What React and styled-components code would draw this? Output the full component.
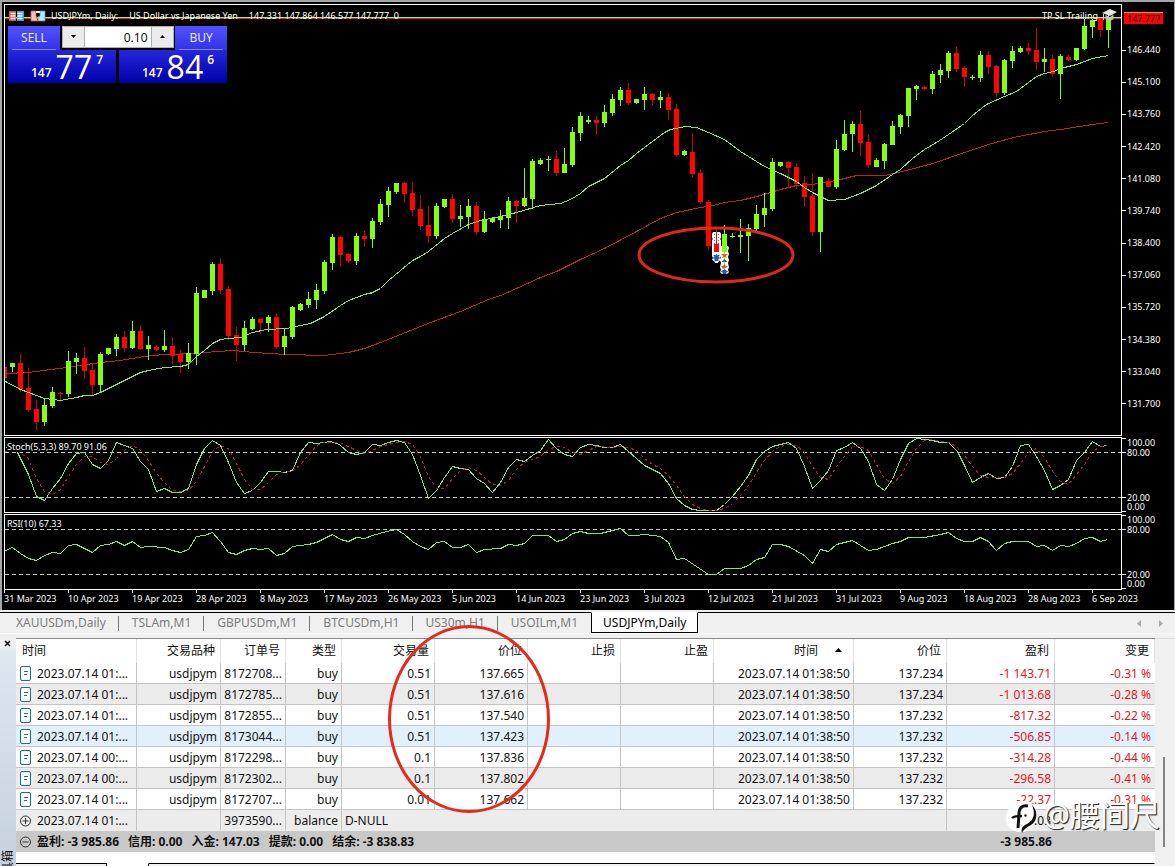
import React from 'react';
import styled, { createGlobalStyle } from 'styled-components';

const Global = createGlobalStyle`
  *, *::before, *::after { box-sizing: border-box; }
  html, body { margin: 0; padding: 0; background: #f0f0f0; }
  button, input { font: inherit; color: inherit; margin: 0; padding: 0; border: 0; border-radius: 0; }
`;

/* ---------- chart data, traced on a grid of three units per pixel ---------- */

// colour, high, body top, body bottom, low
const candleGroups = [
  {
    first: 0,
    top: 220,
    rows: `r 441 441 473 473|g 429 429 441 455|r 402 429 507 517|r 444 504 570 575|r 540 567 606 629|g 535 555 606 617|g 501 516 558 563|r 516 519 522 541|g 393 423 522 530|g 399 414 426 461|r 381 414 453 476|r 432 450 495 524|g 396 402 495 518|g 384 384 402 405|g 342 351 387 408|r 334 351 384 395|g 303 333 384 388|r 315 333 387 390|g 348 375 387 419|r 375 381 390 393|g 330 378 390 397|r 351 378 408 431|r 390 402 426 459|g 369 399 426 446|g 201 219 402 434|g 210 210 234 234|g 126 132 213 224|r 114 132 210 221|r 198 207 348 359|r 321 345 375 422|g 303 324 375 394|g 291 297 327 330|r 297 297 309 342|g 285 291 309 335|r 280 291 381 387|g 324 348 381 404|g 258 261 351 357|g 249 252 270 273|g 216 237 255 263|g 192 210 240 266|g 120 126 213 221|g 42 51 129 150|r 48 51 105 140|r 99 102 123 128|g 39 48 123 134|r 33 48 57 81`,
  },
  {
    first: 46,
    top: 60,
    rows: `g 475 483 537 564|g 417 432 486 494|g 381 393 435 470|g 369 369 396 402|r 366 369 402 429|r 366 399 450 467|r 405 447 498 509|r 438 495 528 548|g 429 438 528 537|g 417 417 441 444|r 402 417 477 488|g 435 468 477 500|g 417 438 471 507|r 426 438 516 524|g 453 477 516 518|g 471 474 486 489|g 450 468 480 504|g 411 423 474 506|r 420 423 438 489|g 324 414 438 441|g 297 303 417 446|g 294 300 312 315|g 288 297 301 333|r 273 297 339 347|g 264 312 339 339|g 201 216 315 320|g 156 168 219 242|g 168 180 186 192|r 168 180 189 224|g 135 156 189 200|g 102 117 159 168|g 81 90 120 138|r 69 90 129 134|g 117 117 129 132|g 81 102 120 150|r 99 102 120 134|g 93 111 120 144|r 99 111 150 180|r 132 147 285 291|g 270 273 285 288|r 219 276 342 350|r 327 339 426 432|r 420 426 558 570|r 507 552 576 585|g 495 522 576 640|g 519 527 531 534|g 477 525 531 579|g 492 504 528 602`,
  },
  {
    first: 94,
    top: 0,
    rows: `g 615 642 687 692|g 579 624 645 681|g 474 486 627 633|g 486 486 498 501|r 483 486 504 561|r 489 501 552 567|r 528 549 591 621|r 519 588 696 708|g 531 531 696 756|r 534 543 561 561|g 420 447 561 567|g 360 402 450 453|g 363 372 402 456|r 333 372 429 467|r 405 426 495 504|g 474 480 501 501|g 429 432 483 507|g 363 378 435 435|g 342 345 381 402|g 264 264 348 381|g 255 258 267 300|r 258 261 267 270|g 213 222 267 281|g 192 210 225 249|g 153 159 213 234|r 141 159 207 215|r 198 204 231 261|g 225 230 234 240|g 153 165 234 246|r 153 165 201 221|r 195 198 279 291|g 177 180 279 285|g 138 153 183 204|g 138 144 156 159|r 129 144 153 165|r 84 150 186 210|g 144 177 186 216|r 165 177 222 231|g 162 168 222 297|r 165 171 180 183|g 144 144 180 183|g 57 78 147 150|g 57 60 81 113|r 54 57 90 110|g 45 57 90 144`,
  },
];

const candles = candleGroups.flatMap(({ first, top, rows }) =>
  rows.split('|').map((row, i) => {
    const [tone, ...levels] = row.split(' ');
    const [high, open, close, low] = levels.map((v) => top + Math.round(v / 3));
    return { x: 4 + 8 * (first + i), tone, high, open, close, low };
  })
);

const trace = (...parts) =>
  parts
    .flatMap(([left, top, pairs]) =>
      pairs.split(' ').map((pair) => {
        const [x, y] = pair.split(',').map(Number);
        return `${Math.floor(left + x / 3) + 0.5},${Math.floor(top + y / 3) + 0.5}`;
      })
    )
    .join(' ');

const fastAverage = trace(
  [0, 220, '15,484 62,507 86,516 110,525 134,536 182,541 230,533 254,527 278,525 302,517 326,506 350,492 374,481 398,468 422,458 446,452 494,443 542,440 566,432 590,408 614,390 638,370 662,359 686,355 722,351 758,338 800,328 860,326 902,317 930,309 974,289 1022,255 1046,242 1094,222 1118,216'],
  [360, 60, '30,699 62,684 86,661 120,630 158,601 182,590 206,575 254,535 278,520 326,494 360,480 422,468 470,456 542,437 600,430 630,417 662,399 686,379 734,354 782,316 806,300 830,280 878,243 912,217 930,208 975,199 1010,201 1046,218 1094,239'],
  [740, 0, '0,454 73,498 121,521 169,543 193,562 217,578 241,590 265,601 313,598 361,580 409,556 457,524 481,508 517,474 553,448 590,428 625,402 673,370 697,346 740,312 793,290 830,273 865,246 890,230 913,219 940,213 961,205 1009,194 1057,175 1105,166']
);
const slowAverage = trace(
  [0, 220, '15,461 86,456 200,443 300,428 360,420 430,409 494,403 590,400 650,393 700,392 760,397 860,404 974,406 1046,397 1094,384 1142,367 1200,343 1290,306 1380,274'],
  [360, 60, '385,718 422,706 470,685 542,653 590,634 662,597 734,564 830,513 900,475 950,457 1020,441 1060,436 1094,427'],
  [740, 0, '0,601 60,585 121,569 169,555 217,552 289,541 349,527 433,525 500,511 577,489 673,457 745,434 820,413 913,394 961,389 1057,372 1105,367']
);
const stochMain = trace(
  [0, 430, '15,52 38,52 53,67 86,132 110,198 134,210 158,176 182,145 206,100 230,70 254,68 278,102 302,115 326,92 350,37 374,46 398,54 422,94 446,118 470,184 494,175 518,187 542,187 566,174 590,102 614,56 638,31 662,47 686,98 710,158 734,189 758,180 782,157 806,124 830,124 854,127 878,122 902,67 926,37 950,40 990,34 1018,43 1046,68 1070,73 1094,68 1118,43 1142,45 1166,36 1190,31'],
  [400, 430, '13,38 37,73 61,136 85,205 109,181 133,142 157,109 181,114 205,118 229,144 253,160 277,187 301,158 325,112 349,88 373,94 397,76 421,62 445,28 469,54 493,73 517,80 541,53 565,42 589,47 613,52 637,52 661,43 685,65 709,84 733,105 757,117 781,129 805,160 829,204 853,226 877,238 901,241 949,241 973,222 997,200 1021,170 1045,135 1069,87 1093,65 1117,49'],
  [780, 430, '1,42 25,37 49,55 73,108 97,176 121,152 145,122 169,60 193,52 217,37 241,54 265,94 289,162 313,181 337,148 361,88 385,41 409,25 433,28 457,31 481,36 505,38 533,64 553,105 577,156 601,142 625,130 649,145 673,142 697,110 721,47 745,43 769,80 793,120 817,177 841,166 865,149 889,92 913,66 937,35 961,49 983,46']
);
const stochSignal = trace(
  [0, 430, '15,65 50,60 86,85 110,145 134,183 158,193 182,178 206,140 230,103 254,78 278,78 302,97 326,104 350,85 374,60 398,46 422,62 446,90 470,131 494,158 518,180 542,184 566,182 590,155 614,110 638,64 662,45 686,56 710,100 734,148 758,178 782,178 806,157 830,133 854,125 878,124 902,103 926,76 950,46 974,38 1018,37 1046,49 1070,62 1094,69 1118,61 1142,50 1166,44 1190,36'],
  [400, 430, '13,34 37,43 61,80 85,140 109,176 133,175 157,145 181,120 205,112 229,120 253,142 277,164 301,166 325,152 349,118 373,96 397,87 421,78 445,58 469,48 493,51 517,68 541,72 565,62 589,50 637,52 661,48 685,52 709,60 733,84 757,102 781,115 805,135 829,165 853,200 877,224 901,235 925,240 949,241 973,235 997,221 1021,197 1045,165 1069,128 1093,92 1117,65'],
  [780, 430, '1,48 25,43 49,46 73,66 97,108 121,142 145,149 169,110 193,78 217,49 241,50 265,62 289,103 313,145 337,161 361,140 385,95 409,55 433,32 457,29 481,33 505,38 529,50 553,75 577,110 601,135 625,142 673,142 697,130 721,100 745,68 769,55 793,82 817,123 841,154 865,163 889,132 913,104 937,65 961,48 983,46']
);
const rsiLine = trace(
  [0, 430, '15,360 38,352 62,370 86,384 110,391 134,377 158,367 182,370 206,346 230,343 254,355 278,367 302,346 326,343 350,334 374,346 398,334 422,352 446,349 494,352 518,361 542,367 566,357 590,320 614,316 638,307 662,333 686,367 710,373 734,361 758,355 782,358 806,355 830,376 854,370 878,350 926,344 950,336 998,313 1022,328 1046,333 1070,322 1094,325 1118,316 1160,304 1190,299'],
  [400, 430, '13,312 37,333 61,348 85,357 109,338 133,334 157,352 181,352 205,343 229,367 253,358 301,355 325,343 349,346 373,340 397,316 445,316 469,334 493,328 517,310 541,303 565,310 601,310 661,296 685,316 709,316 733,313 781,320 805,338 829,388 853,385 925,433 949,433 973,415 1021,415 1045,406 1069,388 1093,381 1117,343'],
  [780, 430, '1,343 25,349 73,375 97,400 121,358 145,364 169,343 217,331 265,361 289,358 337,341 361,334 385,322 433,322 481,313 505,307 529,325 553,334 577,334 601,322 625,333 649,361 673,340 697,334 745,334 769,349 793,346 817,360 841,346 865,350 889,340 913,325 937,322 961,334 983,328']
);

const prices = ['146.440', '145.100', '143.760', '142.420', '141.080', '139.740', '138.400', '137.060', '135.720', '134.380', '133.040', '131.700'];
const dates = ['31 Mar', '10 Apr', '19 Apr', '28 Apr', '8 May', '17 May', '26 May', '5 Jun', '14 Jun', '23 Jun', '3 Jul', '12 Jul', '21 Jul', '31 Jul', '9 Aug', '18 Aug', '28 Aug', '6 Sep'];
const symbolTabs = ['XAUUSDm,Daily', 'TSLAm,M1', 'GBPUSDm,M1', 'BTCUSDm,H1', 'US30m,H1', 'USOILm,M1'];
const totals = ['盈利: -3 985.86', '信用: 0.00', '入金: 147.03', '提款: 0.00', '结余: -3 838.83'];
const columns = [
  ['时间', 121], ['交易品种', 84], ['订单号', 65], ['类型', 56], ['交易量', 93], ['价位', 93],
  ['止损', 93], ['止盈', 93], ['时间', 140], ['价位', 93], ['盈利', 108], ['变更', 100],
];
const deals = [
  ['01', '8172708', '0.51', '137.665', '137.234', '-1 143.71', '-0.31 %'],
  ['01', '8172785', '0.51', '137.616', '137.234', '-1 013.68', '-0.28 %'],
  ['01', '8172855', '0.51', '137.540', '137.232', '-817.32', '-0.22 %'],
  ['01', '8173044', '0.51', '137.423', '137.232', '-506.85', '-0.14 %'],
  ['00', '8172298', '0.1', '137.836', '137.232', '-314.28', '-0.44 %'],
  ['00', '8172302', '0.1', '137.802', '137.232', '-296.58', '-0.41 %'],
  ['01', '8172707', '0.01', '137.662', '137.232', '-22.37', '-0.31 %'],
];

/* ---------- styled parts ---------- */

const Workspace = styled.div`
  position: relative;
  height: 100vh;
  overflow: hidden;
  background: #f0f0f0;
  color: #111;
  font: 12px/20px "Noto Sans", "Noto Sans CJK SC", sans-serif;
`;
const ChartWindow = styled.section`
  display: grid;
  grid-template-columns: minmax(0, 1fr) 52px;
  row-gap: 1px;
  padding: 2px 0 0 2px;
  border: solid #a3a6a6;
  border-width: 2px 1px 0 2px;
  background: #000;
  color: #fff;
  font-size: 9px;
  line-height: 12px;
`;
const Pane = styled.div`
  position: relative;
  height: ${(p) => p.$height}px;
  border: 1px solid #fff;
`;
const Plot = styled.svg`
  display: block;
  width: 100%;
  height: 100%;
`;
const PaneLabel = styled.span`
  position: absolute;
  top: 3px;
  left: 2px;
  background: #000;
  line-height: 11px;
  white-space: pre;
`;
const PriceScale = styled.div`
  display: flex;
  flex-direction: column;
  height: 432px;
  padding: 8px 0 26px;
`;
const LastPrice = styled.span`
  width: 39px;
  height: 12px;
  margin: 0 0 20px 2px;
  padding-left: 3px;
  border-top: 1px solid #f09020;
  background: #f00;
  color: #000;
`;
const PriceLabels = styled.div`
  flex: 1;
  display: flex;
  flex-direction: column;
  justify-content: space-between;
`;
const ScaleLabel = styled.span`
  display: flex;
  align-items: center;
  gap: 1px;
  &::before {
    content: '';
    width: 4px;
    height: 1px;
    background: ${(p) => (p.$plain ? 'transparent' : '#fff')};
  }
`;
const LevelScale = styled.div`
  display: flex;
  flex-direction: column;
  justify-content: space-between;
  height: 76px;
  line-height: 9px;
  padding: 1px 0 2px;
  background: linear-gradient(#fff, #fff) 0 1px / 4px 1px no-repeat, linear-gradient(#fff, #fff) 0 74px / 4px 1px no-repeat;
`;
const LevelPair = styled.div`
  display: grid;
  row-gap: ${(p) => p.$gap}px;
`;
const DateScale = styled.div`
  grid-column: 1 / -1;
  display: grid;
  grid-template-columns: repeat(17, minmax(0, 64fr)) minmax(0, 82fr);
  height: 20px;
  margin-top: -1px;
`;
const DateLabel = styled.span`
  white-space: nowrap;
  &::before {
    content: '';
    display: block;
    width: 1px;
    height: 3px;
    background: #fff;
  }
`;
const ChartTitle = styled.div`
  position: absolute;
  top: 4px;
  left: 4px;
  right: 4px;
  display: flex;
  align-items: center;
  white-space: pre;
`;
const TitleIcon = styled.svg`
  width: 16px;
  height: 12px;
  margin-right: 5px;
`;
const TitleText = styled.span`
  display: flex;
  gap: 11px;
`;
const Expert = styled.span`
  display: flex;
  gap: 4px;
  align-items: center;
  margin-left: auto;
`;

const TradePanel = styled.div`
  position: absolute;
  top: 21px;
  left: 3px;
  width: 219px;
  font-family: "Open Sans", "Noto Sans", sans-serif;
`;
const TradeRow = styled.div`
  display: flex;
  justify-content: space-between;
`;
const SideButton = styled.button`
  width: 52px;
  height: 24px;
  background: linear-gradient(#5252ff, #3232e6);
  color: #eef;
  font-size: 12px;
  line-height: 23px;
  &::after {
    content: '';
    display: block;
    height: 1px;
    margin: 0 4px;
    background: #8686ff;
  }
`;
const Spinner = styled.div`
  display: flex;
  width: 112px;
  height: 22px;
  border: 1px solid #b0b0b0;
  background: #fff;
  color: #000;
`;
const SpinButton = styled.button`
  display: grid;
  place-items: center;
  flex: 0 0 21px;
  background: #ebebeb;
`;
const VolumeInput = styled.input`
  flex: 1;
  min-width: 0;
  padding: 0 3px;
  border: solid #b0b0b0;
  border-width: 0 1px;
  background: #fff;
  font-size: 12px;
  text-align: right;
  outline: 0;
`;
const PriceButton = styled.button`
  display: flex;
  width: 108px;
  height: 33px;
  padding-left: 23px;
  background: linear-gradient(#2626dc, #0000aa);
  color: #fff;
  font-size: 12px;
  font-weight: 600;
  text-align: left;
`;
const Whole = styled.span`
  padding-top: 13px;
  line-height: 20px;
`;
const Big = styled.span`
  margin: 0 4px;
  font-size: 32px;
  font-weight: 400;
  line-height: 34px;
`;
const Pip = styled.span`
  line-height: 20px;
`;

const TabBar = styled.nav`
  display: flex;
  height: 22px;
  margin-top: 2px;
  padding-left: 3px;
  border-top: 1px solid #000;
  border-bottom: 1px solid #fafafa;
  color: #7c7c7c;
`;
const Tab = styled.button`
  position: relative;
  padding: 0 13px;
  background: none;
  line-height: 20px;
  &:not(:last-of-type)::after {
    content: '';
    position: absolute;
    top: 3px;
    right: 0;
    width: 1px;
    height: 15px;
    background: #777;
  }
`;
const ActiveTab = styled.button`
  height: 21px;
  margin-top: -1px;
  padding: 0 11px;
  border: 1px solid #000;
  border-top-color: #fff;
  background: #fff;
  color: #000;
  line-height: 18px;
`;
const TabList = styled.div`
  display: flex;
`;
const Arrows = styled.div`
  display: flex;
  gap: 18px;
  margin-left: auto;
  padding-right: 12px;
  button { background: none; display: grid; place-items: center; }
`;

const Terminal = styled.section`
  display: grid;
  grid-template-columns: 16px minmax(0, 1fr) 20px;
  margin-top: 4px;
`;
const SideStrip = styled.aside`
  display: flex;
  flex-direction: column;
  justify-content: space-between;
  background: linear-gradient(#f0f0f0 8px, #dde7f0 14px, #c2cfdd);
`;
const CloseButton = styled.button`
  width: 14px;
  height: 11px;
  display: grid;
  place-items: center;
  background: none;
`;
const StripLabel = styled.span`
  writing-mode: vertical-rl;
  text-orientation: sideways;
  rotate: 180deg;
  line-height: 16px;
`;
const TablePanel = styled.div`
  background: #fff;
  border-top: 1px solid #888;
`;
const DealTable = styled.table`
  width: 100%;
  table-layout: fixed;
  border-collapse: separate;
  border-spacing: 0;
`;
const HeadCell = styled.th`
  height: 24px;
  padding: 0 5px;
  border-right: 1px solid #e2e2e2;
  font-weight: 400;
  text-align: right;
  white-space: nowrap;
  &:first-child { text-align: left; padding-left: 6px; }
`;
const SortMark = styled.svg`
  margin: 0 6px 3px 17px;
  vertical-align: middle;
`;
const Row = styled.tr`
  background: ${(p) => p.$fill};
`;
const Cell = styled.td`
  height: 21px;
  padding: 2px 3px 0;
  border: solid #c4c4c4;
  border-width: 0 1px 1px 0;
  border-bottom-color: ${(p) => (p.$last ? '#ececec' : '#c4c4c4')};
  color: ${(p) => (p.$loss ? '#e8141c' : 'inherit')};
  line-height: 18px;
  text-align: ${(p) => (p.$left ? 'left' : 'right')};
  white-space: nowrap;
  overflow: hidden;
  &:last-child { border-right-color: transparent; }
`;
const WithIcon = styled.span`
  display: flex;
  align-items: center;
  gap: 5px;
  padding-left: 1px;
`;
const Total = styled.td`
  height: 21px;
  padding: 0 3px;
  background: #c8c8c8;
  font-weight: 700;
  line-height: 20px;
  text-align: ${(p) => (p.$left ? 'left' : 'right')};
  white-space: pre;
`;
const TotalList = styled.span`
  display: flex;
  gap: 9px;
`;
const BottomTabs = styled.div`
  display: grid;
  grid-template-columns: 91px 42px 1fr;
  height: 23px;
  margin-top: 11px;
  background: #fff;
`;
const BottomTab = styled.span`
  border-top: 1px solid ${(p) => (p.$active ? '#fff' : '#000')};
  background: ${(p) => (p.$active ? '#fff' : '#f0f0f0')};
  border-right: 1px solid ${(p) => (p.$last ? '#f0f0f0' : '#000')};
`;
const ScrollTrack = styled.div`
  padding: 118px 9px 0 8px;
  border-top: 1px solid #ddd;
`;
const ScrollThumb = styled.div`
  height: 90px;
  width: 2px;
  background: #858585;
`;
const Mark = styled.svg`
  position: absolute;
  top: ${(p) => p.$top}px;
  left: ${(p) => p.$left}px;
  pointer-events: none;
`;
const Watermark = styled.div`
  position: absolute;
  top: 796px;
  right: 15px;
  display: flex;
  align-items: center;
  gap: 4px;
  color: #fff;
  font-size: 30px;
  line-height: 38px;
  text-shadow: 1px 1px 1px #333, 1px 1px 0 #555;
  white-space: nowrap;
`;

/* ---------- drawings ---------- */

const Caret = ({ d, fill = '#000', w = 7, h = 4 }) => (
  <svg width={w} height={h} viewBox={`0 0 ${w} ${h}`} aria-hidden="true"><path d={d} fill={fill} /></svg>
);

const DealIcon = () => (
  <svg width="12" height="16" viewBox="0 0 12 16" fill="none" stroke="#1d6aa0" aria-hidden="true">
    <rect x="0.5" y="0.5" width="10" height="14" rx="1.5" fill="#fff" />
    <path d="M4 5.5h4M4 8.5h3" />
  </svg>
);

const CircleIcon = ({ plus }) => (
  <svg width="12" height="12" viewBox="0 0 12 12" fill="none" stroke="#333" aria-hidden="true">
    <circle cx="5.5" cy="6" r="5" />
    <path d={plus ? 'M2.5 6h6M5.5 3v6' : 'M2.5 6h6'} />
  </svg>
);

const TradeMarks = () => (
  <g shapeRendering="auto">
    <path d="M713 232h7l1 2v4l-1 1 1 1v16l-1 2 1 2-2 1-1 2h-3l-1-2-2-1 1-2-1-2v-16l1-1-1-1v-4z" fill="#fff" />
    <path d="M714.500 234v10M718.500 234v10" stroke="#f03030" strokeDasharray="1 2" />
    <path d="M716.500 230v22" stroke="#e01010" />
    <rect x="714" y="244" width="5" height="8" fill="#ff0404" />
    <path d="M713.500 255.500h1.500M718 255.500h1.500" stroke="#1560b0" />
    <path d="M716.500 254l4 4.500h-2v2.500h-4v-2.500h-2z" fill="#1560b0" />
    <path d="M721 246h7l1 2-1 3 1 3-1 3 1 3-1 3 1 4-1 3 1 2-2 2h-5l-2-2 1-2-1-3 1-4-1-3 1-3-1-3 1-3z" fill="#fff" />
    <path d="M724.500 246v26" stroke="#84ff08" />
    <path d="M721 254h7l-2 2 1 2-2.500-1-2.500 1 1-2z" fill="#d86a20" />
    <path d="M721.500 262l3-3 3 3z" fill="#1560b0" />
    <path d="M721 266h2l1.500-2 1.500 2h2l-2 2-3 1z" fill="#d86a20" />
    <path d="M724.500 269l4 3h-2v2h-4v-2h-2z" fill="#1560b0" />
    <rect x="722" y="234" width="5" height="18" fill="#84ff08" />
  </g>
);

const Candle = ({ x, tone, high, open, close, low }) => (
  <g fill={tone === 'g' ? '#84ff08' : '#ff0404'}>
    <rect x={x} y={high} width="1" height={Math.max(low - high, 1)} fillOpacity={tone === 'g' ? 1 : 0.8} />
    <rect x={x - 2} y={open} width="5" height={Math.max(close - open, 1)} />
  </g>
);

const Levels = ({ ys }) => ys.map((y) => (
  <path key={y} d={`M5 ${y + 0.5}H1121`} stroke="#c8c8c8" strokeDasharray="4 3" />
));

const LevelAxis = () => (
  <LevelScale>
    <LevelPair $gap={1}><ScaleLabel $plain>100.00</ScaleLabel><ScaleLabel>80.00</ScaleLabel></LevelPair>
    <LevelPair $gap={0}><ScaleLabel>20.00</ScaleLabel><ScaleLabel $plain>0.00</ScaleLabel></LevelPair>
  </LevelScale>
);

const PriceQuote = ({ whole, big, pip }) => (
  <PriceButton><Whole>{whole}</Whole><Big>{big}</Big><Pip>{pip}</Pip></PriceButton>
);

export default function App() {
  return (
    <Workspace>
      <Global />
      <ChartWindow>
        <Pane $height={432}>
          <Plot viewBox="5 5 1116 430" preserveAspectRatio="none" shapeRendering="crispEdges" fill="none">
            <path d="M5 17.500H1121" stroke="#a6e878" />
            <path d="M5 18.500H1121" stroke="#d83018" />
            <polyline points={slowAverage} stroke="#b82424" />
            {candles.map((c) => <Candle key={c.x} {...c} />)}
            <TradeMarks />
            <polyline points={fastAverage} stroke="#90e054" />
          </Plot>
          <ChartTitle>
            <TitleIcon viewBox="0 0 16 12">
              <path d="M0 1h7v10H0z" fill="#e05048" /><path d="M8 1h7v10H8z" fill="#3aa0dc" />
              <path d="M1.500 3.500h5M1.500 6h5M1.500 8.500h5M8.500 3.500h5M8.500 6h5M8.500 8.500h5" stroke="#fff" strokeWidth="1.400" />
            </TitleIcon>
            <TitleIcon viewBox="0 0 16 12">
              <path d="M1 1h5v5l2 5H1z" fill="#f6c0b8" stroke="#d85048" strokeWidth="0.800" />
              <path d="M10 1h5v10H8V7l2-1z" fill="#bfe4fa" stroke="#3a9ad8" strokeWidth="0.800" />
              <path d="M6 1h4v2H6z" fill="#fff" />
            </TitleIcon>
            <TitleText>
              <span>USDJPYm, Daily:</span>
              <span>US Dollar vs Japanese Yen</span>
              <span>{'147.331 147.864 146.577 147.777  0'}</span>
            </TitleText>
            <Expert>
              TP SL Trailing
              <svg width="15" height="13" viewBox="0 0 15 13" aria-hidden="true">
                <path d="M0 4l8-4 7 3-7 4z" fill="#e4e4e4" />
                <path d="M3.500 6v4c2 2 6 2 8 0V5.500L8 8z" fill="#c2c2c2" />
                <path d="M1.500 5v6" stroke="#d0d0d0" />
              </svg>
            </Expert>
          </ChartTitle>
          <TradePanel>
            <TradeRow>
              <SideButton>SELL</SideButton>
              <Spinner>
                <SpinButton aria-label="Decrease volume"><Caret d="M1 0h5L3.500 3z" /></SpinButton>
                <VolumeInput aria-label="Volume" defaultValue="0.10" />
                <SpinButton aria-label="Increase volume"><Caret d="M1 3h5L3.500 0z" /></SpinButton>
              </Spinner>
              <SideButton>BUY</SideButton>
            </TradeRow>
            <TradeRow>
              <PriceQuote whole="147" big="77" pip="7" />
              <PriceQuote whole="147" big="84" pip="6" />
            </TradeRow>
          </TradePanel>
        </Pane>
        <PriceScale>
          <LastPrice>147.777</LastPrice>
          <PriceLabels>{prices.map((p) => <ScaleLabel key={p}>{p}</ScaleLabel>)}</PriceLabels>
        </PriceScale>

        <Pane $height={76}>
          <Plot viewBox="5 438 1116 74" preserveAspectRatio="none" shapeRendering="crispEdges" fill="none">
            <Levels ys={[452, 497]} />
            <polyline points={stochMain} stroke="#90e054" />
            <polyline points={stochSignal} stroke="#a82420" strokeDasharray="3 3" />
          </Plot>
          <PaneLabel>Stoch(5,3,3) 89.70 91.06</PaneLabel>
        </Pane>
        <LevelAxis />

        <Pane $height={76}>
          <Plot viewBox="5 515 1116 74" preserveAspectRatio="none" shapeRendering="crispEdges" fill="none">
            <Levels ys={[529, 574]} />
            <polyline points={rsiLine} stroke="#90e054" />
          </Plot>
          <PaneLabel>RSI(10) 67.33</PaneLabel>
        </Pane>
        <LevelAxis />

        <DateScale>{dates.map((d) => <DateLabel key={d}>{d} 2023</DateLabel>)}</DateScale>
      </ChartWindow>

      <TabBar>
        <TabList>{symbolTabs.map((t) => <Tab key={t}>{t}</Tab>)}</TabList>
        <ActiveTab>USDJPYm,Daily</ActiveTab>
        <Arrows>
          <button aria-label="Previous tabs"><Caret w={4} h={7} d="M4 0v7L0 3.500z" fill="#aaa" /></button>
          <button aria-label="Next tabs"><Caret w={4} h={7} d="M0 0v7l4-3.500z" fill="#aaa" /></button>
        </Arrows>
      </TabBar>

      <Terminal>
        <SideStrip>
          <CloseButton aria-label="Close">
            <svg width="7" height="7" viewBox="0 0 7 7" stroke="#000" strokeWidth="1.500"><path d="M1 1l5 5M6 1L1 6" /></svg>
          </CloseButton>
          <StripLabel>工具箱</StripLabel>
        </SideStrip>
        <TablePanel>
          <DealTable>
            <colgroup>{columns.map(([, w], i) => <col key={i} width={w} />)}</colgroup>
            <thead>
              <tr>
                {columns.map(([name], i) => (
                  <HeadCell key={i} scope="col">
                    {name}
                    {i === 8 && <SortMark width="7" height="4" viewBox="0 0 7 4"><path d="M0 4h7L3.500 0z" /></SortMark>}
                  </HeadCell>
                ))}
              </tr>
            </thead>
            <tbody>
              {deals.map(([hour, order, volume, open, close, profit, change], i) => (
                <Row key={order} $fill={i === 3 ? '#e1f0fd' : i % 2 ? '#ebebeb' : '#fff'}>
                  <Cell $left><WithIcon><DealIcon />2023.07.14 {hour}:...</WithIcon></Cell>
                  <Cell>usdjpym</Cell>
                  <Cell>{order}...</Cell>
                  <Cell>buy</Cell>
                  <Cell>{volume}</Cell>
                  <Cell>{open}</Cell>
                  <Cell />
                  <Cell />
                  <Cell>2023.07.14 01:38:50</Cell>
                  <Cell>{close}</Cell>
                  <Cell $loss>{profit}</Cell>
                  <Cell $loss>{change}</Cell>
                </Row>
              ))}
              <Row $fill="#ececec">
                <Cell $left $last><WithIcon><CircleIcon plus />2023.07.14 01:...</WithIcon></Cell>
                <Cell $last />
                <Cell $last>3973590...</Cell>
                <Cell $last>balance</Cell>
                <Cell $left $last colSpan={6}>D-NULL</Cell>
                <Cell $last>147.03</Cell>
                <Cell $last />
              </Row>
            </tbody>
            <tfoot>
              <tr>
                <Total $left colSpan={10}>
                  <WithIcon>
                    <CircleIcon />
                    <TotalList>{totals.map((t) => <span key={t}>{t}</span>)}</TotalList>
                  </WithIcon>
                </Total>
                <Total>-3 985.86</Total>
                <Total />
              </tr>
            </tfoot>
          </DealTable>
          <BottomTabs><BottomTab /><BottomTab $active /><BottomTab $last /></BottomTabs>
        </TablePanel>
        <ScrollTrack><ScrollThumb /></ScrollTrack>
      </Terminal>

      <Mark $top={225} $left={637} width="159" height="60" viewBox="637 225 159 60">
        <ellipse cx="716" cy="255" rx="77" ry="27" fill="none" stroke="#e02818" strokeWidth="3" />
      </Mark>
      <Mark $top={624} $left={386} width="166" height="190" viewBox="386 624 166 190">
        <ellipse cx="469" cy="719" rx="79.500" ry="92.500" fill="none" stroke="#e52a1c" strokeWidth="3" />
      </Mark>
      <Watermark>
        <svg width="34" height="38" viewBox="1003 796 34 38" aria-hidden="true">
          <path d="M1004 820c0-12 7-19 18-19 8 0 13 6 13 13 0 8-5 14-13 18-9 1-17-3-18-12z" fill="#fff" />
          <path d="M1030 805c6 5 6 16-1 20-4 2-7 4-9 8-1-4 0-7 5-9 8-4 8-12 5-19z" fill="#111" />
          <path d="M1026 806c-6-1-9 2-9 8l-1 14" fill="none" stroke="#111" strokeWidth="3" />
          <path d="M1010 818c2-2 5-2 10-2" fill="none" stroke="#111" strokeWidth="2.400" />
          <circle cx="1023.500" cy="815.500" r="1.200" fill="#111" />
        </svg>
        <span>@腰间尺</span>
      </Watermark>
    </Workspace>
  );
}
